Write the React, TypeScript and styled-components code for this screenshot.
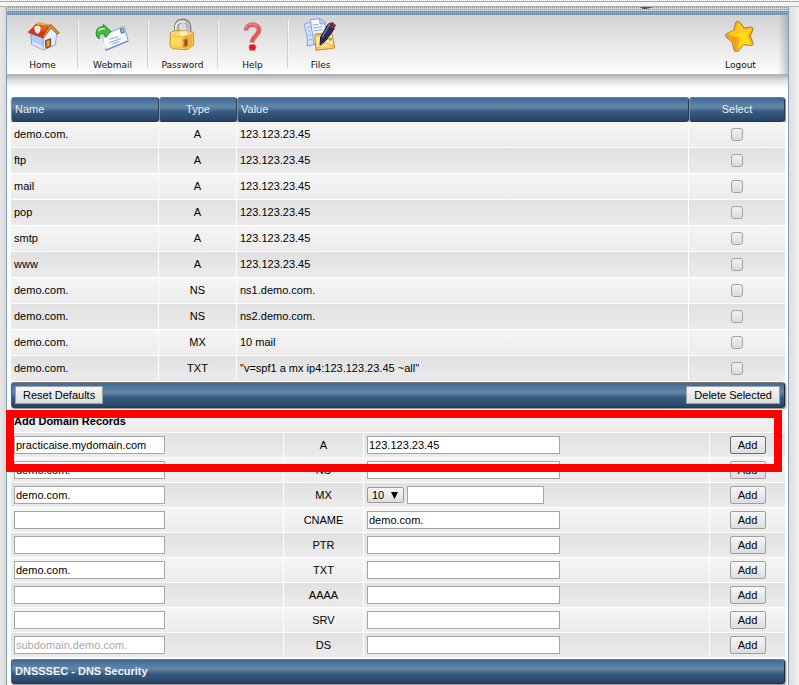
import React from 'react';
import styled, { createGlobalStyle } from 'styled-components';

const GlobalStyle = createGlobalStyle`
  *, *::before, *::after { box-sizing: border-box; }
  html, body { margin: 0; }
  body {
    background: #ebebeb;
    color: #000;
    font-family: "Liberation Sans", Arial, sans-serif;
    font-size: 11px;
    line-height: 13px;
  }
`;

const barGradient =
  'linear-gradient(to bottom, #3f6a94 0%, #6484a8 36%, #5f80a4 42%, #345b84 60%, #2b4a6b 90%, #26415e 100%)';

const Page = styled.div`
  min-height: 100vh;
  display: flex;
  flex-direction: column;
  background: #ebebeb;
`;

const TopStrip = styled.div`
  flex: none;
  height: 7px;
  background: linear-gradient(to bottom, #f4f5f2 1px, #a3aaa3 1px, #a3aaa3 2px, #f3f5f1 2px, #f3f5f1 6px, #b1b1b1 6px);
`;

const Frame = styled.div`
  flex: 1;
  display: grid;
  grid-template-columns: 6px minmax(0, 1fr) 10px;
`;

const Edge = styled.div<{ $side: 'left' | 'right' }>`
  background: ${(p) =>
    p.$side === 'left'
      ? 'linear-gradient(to right, #e8e8e8, #dadada)'
      : 'linear-gradient(to right, #dedede, #f2f2f2)'};
`;

const Panel = styled.div`
  border: solid #7c9dbb;
  border-width: 0 1px;
  background: #fff;
`;

const DottedBand = styled.div`
  position: relative;
  height: 8px;
  border-bottom: 1px solid #7899bd;
  background:
    conic-gradient(rgba(70, 85, 105, 0.5) 25%, transparent 0) 0 0 / 2px 2px,
    linear-gradient(to bottom, #d0d2d4 4px, #8ba6c2 4px);
`;

const Smudge = styled.svg`
  position: absolute;
  top: 0;
  right: 134px;
`;

const Toolbar = styled.nav`
  display: flex;
  justify-content: space-between;
  height: 61px;
  padding: 0 15px 0 1px;
  border-bottom: 2px solid #b6b6b6;
  background:
    linear-gradient(to left, rgba(120, 120, 120, 0.4), rgba(120, 120, 120, 0) 10px),
    linear-gradient(to bottom, #d2d2d2, #e6e6e6 45%, #fcfcfc);
`;

const ToolGroup = styled.div`
  display: flex;
  padding-top: 3px;
`;

const ToolLink = styled.a<{ $divided?: boolean }>`
  display: flex;
  flex-direction: column;
  align-items: center;
  gap: 8px;
  width: ${(p) => (p.$divided ? 70 : 65)}px;
  height: 48px;
  margin-top: 2px;
  border-right: ${(p) => (p.$divided ? '1px solid #cfcfcf' : '0')};
  box-shadow: ${(p) => (p.$divided ? '1px 0 0 #f5f5f5' : 'none')};
  color: #111;
  font-family: "DejaVu Sans", Verdana, sans-serif;
  font-size: 9px;
  line-height: 11px;
  text-decoration: none;

  svg { display: block; flex: none; margin-top: -2px; }
`;

const ToolShadow = styled.div`
  height: 21px;
  background: linear-gradient(to bottom, #bcbcbc, #e3e3e3 5px, #fafafa 11px, #fff 14px);
`;

const Content = styled.main`
  padding: 0 3px 0 4px;
`;

const DataTable = styled.table`
  width: 100%;
  table-layout: fixed;
  border-collapse: separate;
  border-spacing: 0;
`;

const Col = styled.col<{ $w?: number }>`
  width: ${(p) => (p.$w ? `${p.$w}px` : 'auto')};
`;

const HeadCell = styled.th<{ $center?: boolean }>`
  height: 25px;
  padding: 0 3px;
  border: 1px solid #24384e;
  border-left-color: #8b8f94;
  border-top-color: #777b80;
  border-radius: 3px;
  box-shadow: 0 1px 1px #8d8d8d;
  background: ${barGradient};
  color: #e9eef3;
  font-weight: normal;
  text-align: ${(p) => (p.$center ? 'center' : 'left')};

  &:last-child { box-shadow: 1px 1px 1px #8d8d8d; }
`;

const Row = styled.tr<{ $dark?: boolean; $compact?: boolean }>`
  td {
    height: ${(p) => (p.$compact ? 25 : 26)}px;
    background: ${(p) =>
      p.$dark
        ? 'linear-gradient(to bottom, #e1e1e1, #ebebeb)'
        : 'linear-gradient(to bottom, #f5f5f5, #ececec)'};
  }
`;

const Cell = styled.td<{ $center?: boolean }>`
  padding: 0 3px;
  border: solid #fff;
  border-width: 0 1px 1px 0;
  text-align: ${(p) => (p.$center ? 'center' : 'left')};

  &:last-child { border-right: 0; }
`;

const CheckBox = styled.input`
  appearance: none;
  display: block;
  width: 12px;
  height: 13px;
  margin: 0 auto;
  border: 1px solid #a3a3a3;
  border-radius: 3px;
  background: linear-gradient(to bottom, #f0f0f0, #dcdcdc);

  &:checked { background: #5f80a4; }
`;

const Bar = styled.div<{ $height: number }>`
  display: flex;
  align-items: center;
  justify-content: space-between;
  height: ${(p) => p.$height}px;
  padding: 0 4px 0 3px;
  border: 1px solid #24384e;
  border-top-color: #777b80;
  border-left-color: #4b5e72;
  border-right-color: #1e2c3b;
  border-radius: 3px;
  box-shadow: 1px 1px 2px #777;
  background: ${barGradient};
`;

const BarTitle = styled.h2`
  margin: 0;
  color: #eef3f8;
  font-size: 11px;
  line-height: 13px;
`;

const Button = styled.button<{ $strong?: boolean; $flat?: boolean }>`
  min-width: 36px;
  height: 18px;
  padding: 0 7px;
  border: 1px solid ${(p) => (p.$strong ? '#6d6d6d' : '#a0a0a0')};
  border-radius: ${(p) => (p.$flat ? 0 : 2)}px;
  background: linear-gradient(to bottom, #f7f7f7, #dddddd);
  color: #000;
  font: inherit;
  line-height: 13px;
  white-space: nowrap;
`;

const AddArea = styled.section`
  position: relative;
  padding: 1px 0 1px;
`;

const AddHeading = styled.h2`
  height: 24px;
  margin: 0;
  padding: 6px 3px 0;
  border-bottom: 1px solid #fff;
  background: linear-gradient(to bottom, #f5f5f5, #ececec);
  font-size: 11px;
  line-height: 13px;
`;

const Highlight = styled.div`
  position: absolute;
  top: 2px;
  left: -5px;
  right: 3px;
  height: 62px;
  border: 8px solid #fe0000;
  border-bottom-width: 8px;
  pointer-events: none;
`;

const TextBox = styled.input<{ $w: number }>`
  display: block;
  width: ${(p) => p.$w}px;
  height: 18px;
  padding: 0 1px;
  border: 1px solid #a5a5a5;
  border-radius: 0;
  background: #fff;
  color: #000;
  font: inherit;
  outline: none;

  &::placeholder { color: #a9a9a9; opacity: 1; }
`;

const Inline = styled.div`
  display: flex;
  align-items: center;
  gap: 3px;
`;

const SelectWrap = styled.span`
  display: inline-grid;
  align-items: center;

  select, svg { grid-area: 1 / 1; }
  svg { justify-self: end; margin-right: 6px; pointer-events: none; }
`;

const Priority = styled.select`
  appearance: none;
  width: 37px;
  height: 16px;
  padding: 0 4px;
  border: 1px solid #9b9b9b;
  border-radius: 2px;
  background: linear-gradient(to bottom, #f5f5f5, #dedede);
  color: #000;
  font: inherit;
  line-height: 13px;
`;

const HomeIcon = () => (
  <svg width="35" height="34" viewBox="15 18 105 102" aria-hidden="true">
    <path d="M32 64 70 76v38L35 97Z" fill="#b4ccfb" stroke="#7f9fe0" strokeWidth="3" strokeLinejoin="round" />
    <path d="M70 76 92 44l18 22-4 33-36 15Z" fill="#e6effe" stroke="#8aa8e6" strokeWidth="3" strokeLinejoin="round" />
    <path d="m36 88 34 14v11L36 97Z" fill="#dce8ff" />
    <path d="M24 61 50 35l44 5-25 38Z" fill="#cf3d12" stroke="#a4380f" strokeWidth="2" strokeLinejoin="round" />
    <path d="m50 34 6-4 38 8-7 7-36-7Z" fill="#eda640" />
    <path d="M64 40h22L76 56H63Z" fill="#dd6420" />
    <path d="m94 38 24 24-6 5-19-19-22 30-4-3 20-33Z" fill="#e08b2e" stroke="#994016" strokeWidth="2" strokeLinejoin="round" />
    <path d="M44 46c4-5 14-5 17 0l-2 13c-3 6-10 5-12 0Z" fill="#dbe8fc" stroke="#f7fbff" strokeWidth="3" />
    <path d="m76 86 16-6v22l-14 7Z" fill="#c17b33" stroke="#75401c" strokeWidth="3" />
    <path d="m82 88 5-2v15l-5 2Z" fill="#e7a85a" />
  </svg>
);

const MailIcon = () => (
  <svg width="35" height="34" viewBox="225 18 105 102" aria-hidden="true">
    <path d="m247 71 65-29 13 45-67 29Z" fill="#eff5ff" stroke="#86a0db" strokeWidth="3" strokeLinejoin="round" />
    <path d="m250 76 59-26 2 6-60 56Z" fill="#fff" opacity=".8" />
    <path d="m258 114 65-27" stroke="#6f83c7" strokeWidth="4" />
    <path d="m268 82 26-8M268 92l34-12M278 95l20-6" stroke="#86a5e8" strokeWidth="3" />
    <path d="m300 51 9-2 4 12-9 3Z" fill="#ecab4d" stroke="#5367b3" strokeWidth="3" />
    <path d="M230 72c-5-15 2-29 20-28v-7l23 21-17 19-3-11c-12-3-17 3-14 14-4-1-7-3-9-8Z" fill="#3fbd37" stroke="#20942d" strokeWidth="3" strokeLinejoin="round" />
    <path d="M235 57c5-7 12-8 20-6" fill="none" stroke="#b6f2a8" strokeWidth="5" />
  </svg>
);

const LockIcon = () => (
  <svg width="35" height="34" viewBox="15 18 105 102" aria-hidden="true">
    <path d="M49 66V45c0-25 38-25 38 0v17" fill="none" stroke="#7d7d7d" strokeWidth="14" />
    <path d="M49 66V45c0-23 37-23 37 0v17" fill="none" stroke="#c3c3c6" strokeWidth="9" />
    <path d="M47 56V43c3-12 17-18 28-11" fill="none" stroke="#f2f2f3" strokeWidth="4" />
    <path d="m31 62 13-6 38 1 18 4 1 38-21 14-42-3-8-7Z" fill="#ffd75c" stroke="#c89327" strokeWidth="3" strokeLinejoin="round" />
    <path d="m33 63 12-4v8h15v-9h21v7l16-2-25 9Z" fill="#ffefaa" />
    <path d="m70 73 27-9v34l-21 12-6-2Z" fill="#efb440" />
    <path d="m36 69 31 6v31M37 104l30 2" fill="none" stroke="#f4b840" strokeWidth="3" />
    <path d="m70 83 13-4v24l-14 2 3-10Z" fill="#a66b25" stroke="#d6902c" strokeWidth="2" />
    <path d="m77 86 3-1v15h-5Z" fill="#784718" />
    <path d="M46 58v8M85 53v11" stroke="#c9c9c9" strokeWidth="7" />
  </svg>
);

const HelpIcon = () => (
  <svg width="35" height="34" viewBox="225 18 105 102" aria-hidden="true">
    <path d="M258 56c-1-24 42-24 39 0-2 16-20 18-21 36" fill="none" stroke="#b97e83" strokeWidth="14" />
    <path d="M258 54c0-21 38-21 38 0-1 16-20 18-20 36" fill="none" stroke="#ef535e" strokeWidth="10" />
    <path d="M256 50c4-15 24-19 37-6" fill="none" stroke="#ff9da1" strokeWidth="3" />
    <path d="M269 98h16l3 8-3 9h-16l-2-9Z" fill="#e9172a" stroke="#d56c74" strokeWidth="2" />
  </svg>
);

const FilesIcon = () => (
  <svg width="35" height="34" viewBox="429 18 105 102" aria-hidden="true">
    <path d="m433 36 26-8 12 68-30 6 2-18Z" fill="#cfdffc" stroke="#82a4e6" strokeWidth="3" />
    <path d="m451 23 30-3 14 10 5 59-38 7Z" fill="#f5f9ff" stroke="#7c9fe4" strokeWidth="3" />
    <path d="m478 21 2 15h15Z" fill="#b6ccfb" stroke="#7597dc" strokeWidth="2" />
    <path d="m458 39 17-2M459 48l27-4M461 57l26-4M462 66l24-3M442 47l8-2M444 58l7-2M446 70l7-2M447 84l9-2" stroke="#87a7eb" strokeWidth="3" />
    <path d="m464 69 52-4 8 43-56 7Z" fill="#f7d36d" stroke="#c88d29" strokeWidth="3" />
    <path d="m468 75 47-5 3 29-46 8Z" fill="#ffe799" />
    <path d="m470 110 26-18 26 13M500 82l14-2" fill="none" stroke="#ddaa3c" strokeWidth="3" />
    <path d="m507 78 8-1v8l-7 1Z" fill="#7bac57" />
    <path d="m482 75 22-38 13-5 9 7-8 19-21 28-17 13Z" fill="#2b2c58" stroke="#161936" strokeWidth="3" strokeLinejoin="round" />
    <path d="m486 76 23-39" stroke="#7079a5" strokeWidth="4" />
    <path d="m504 36 17 11M512 33l11 6v14" fill="none" stroke="#ce4934" strokeWidth="3" />
  </svg>
);

const StarIcon = () => (
  <svg width="35" height="34" viewBox="369 54 105 102" aria-hidden="true">
    <path
      d="M407 67q6-6 13 0l13 17 21-3q6 1 5 8l-8 19 9 23q-1 6-8 6l-22-3-15 19q-7 5-12-1l-7-26-17-14q-5-7 0-11l22-10Z"
      fill="#fba719" stroke="#a98047" strokeWidth="3" strokeLinejoin="round"
    />
    <path d="m416 68 15 21 24-4-13 24 14 26-25-3-17 18 5-39-31-4 21-10Z" fill="#ffdb15" />
    <path d="m384 99 22-8 7-20 11 21 27-4-18 9-21 2-12 8Z" fill="#ffc51c" />
    <path d="m382 106 26 8-1 36-6-27Z" fill="#f69718" />
  </svg>
);

const tools = [
  { name: 'Home', Icon: HomeIcon },
  { name: 'Webmail', Icon: MailIcon },
  { name: 'Password', Icon: LockIcon },
  { name: 'Help', Icon: HelpIcon },
  { name: 'Files', Icon: FilesIcon },
];

const records = [
  ['demo.com.', 'A', '123.123.23.45'],
  ['ftp', 'A', '123.123.23.45'],
  ['mail', 'A', '123.123.23.45'],
  ['pop', 'A', '123.123.23.45'],
  ['smtp', 'A', '123.123.23.45'],
  ['www', 'A', '123.123.23.45'],
  ['demo.com.', 'NS', 'ns1.demo.com.'],
  ['demo.com.', 'NS', 'ns2.demo.com.'],
  ['demo.com.', 'MX', '10 mail'],
  ['demo.com.', 'TXT', '"v=spf1 a mx ip4:123.123.23.45 ~all"'],
];

const newRecords = [
  { type: 'A', name: 'practicaise.mydomain.com', value: '123.123.23.45' },
  { type: 'NS', name: 'demo.com.', value: '' },
  { type: 'MX', name: 'demo.com.', value: '' },
  { type: 'CNAME', name: '', value: 'demo.com.' },
  { type: 'PTR', name: '', value: '' },
  { type: 'TXT', name: 'demo.com.', value: '' },
  { type: 'AAAA', name: '', value: '' },
  { type: 'SRV', name: '', value: '' },
  { type: 'DS', name: '', value: '', hint: 'subdomain.demo.com.' },
];

export default function App() {
  return (
    <Page>
      <GlobalStyle />
      <TopStrip />
      <Frame>
        <Edge $side="left" />
        <Panel>
          <DottedBand>
            <Smudge width="14" height="3" viewBox="0 0 14 3" aria-hidden="true">
              <path d="M0 0h13l-3 1-4 1H3Z" fill="#555" />
            </Smudge>
          </DottedBand>
          <Toolbar>
            <ToolGroup>
              {tools.map(({ name, Icon }, i) => (
                <ToolLink key={name} href="#" $divided={i < tools.length - 1}>
                  <Icon />
                  {name}
                </ToolLink>
              ))}
            </ToolGroup>
            <ToolGroup>
              <ToolLink href="#">
                <StarIcon />
                Logout
              </ToolLink>
            </ToolGroup>
          </Toolbar>
          <ToolShadow />
          <Content>
            <DataTable>
              <colgroup>
                <Col $w={148} />
                <Col $w={78} />
                <Col />
                <Col $w={96} />
              </colgroup>
              <thead>
                <tr>
                  <HeadCell>Name</HeadCell>
                  <HeadCell $center>Type</HeadCell>
                  <HeadCell>Value</HeadCell>
                  <HeadCell $center>Select</HeadCell>
                </tr>
              </thead>
              <tbody>
                {records.map(([name, type, value], i) => (
                  <Row key={i} $dark={i % 2 === 1}>
                    <Cell>{name}</Cell>
                    <Cell $center>{type}</Cell>
                    <Cell>{value}</Cell>
                    <Cell $center>
                      <CheckBox type="checkbox" aria-label={`Select ${name} ${type}`} />
                    </Cell>
                  </Row>
                ))}
              </tbody>
            </DataTable>
            <Bar $height={26}>
              <Button $flat type="button">Reset Defaults</Button>
              <Button $flat type="button">Delete Selected</Button>
            </Bar>
            <AddArea>
              <AddHeading>Add Domain Records</AddHeading>
              <DataTable>
                <colgroup>
                  <Col $w={273} />
                  <Col $w={80} />
                  <Col />
                  <Col $w={75} />
                </colgroup>
                <tbody>
                  {newRecords.map(({ type, name, value, hint }, i) => (
                    <Row key={type} $compact $dark={i % 2 === 0}>
                      <Cell>
                        <TextBox $w={151} defaultValue={name} placeholder={hint} aria-label={`${type} name`} />
                      </Cell>
                      <Cell $center>{type}</Cell>
                      <Cell>
                        {type === 'MX' ? (
                          <Inline>
                            <SelectWrap>
                              <Priority aria-label="MX priority" defaultValue="10">
                                <option>10</option>
                                <option>20</option>
                                <option>30</option>
                              </Priority>
                              <svg width="7" height="7" viewBox="0 0 7 7" aria-hidden="true">
                                <path d="M0 0h7L3.500 7Z" fill="#000" />
                              </svg>
                            </SelectWrap>
                            <TextBox $w={137} defaultValue={value} aria-label="MX value" />
                          </Inline>
                        ) : (
                          <TextBox $w={193} defaultValue={value} aria-label={`${type} value`} />
                        )}
                      </Cell>
                      <Cell $center>
                        <Button type="button" $strong={i === 0}>Add</Button>
                      </Cell>
                    </Row>
                  ))}
                </tbody>
              </DataTable>
              <Highlight />
            </AddArea>
            <Bar $height={25}>
              <BarTitle>DNSSSEC - DNS Security</BarTitle>
            </Bar>
          </Content>
        </Panel>
        <Edge $side="right" />
      </Frame>
    </Page>
  );
}
